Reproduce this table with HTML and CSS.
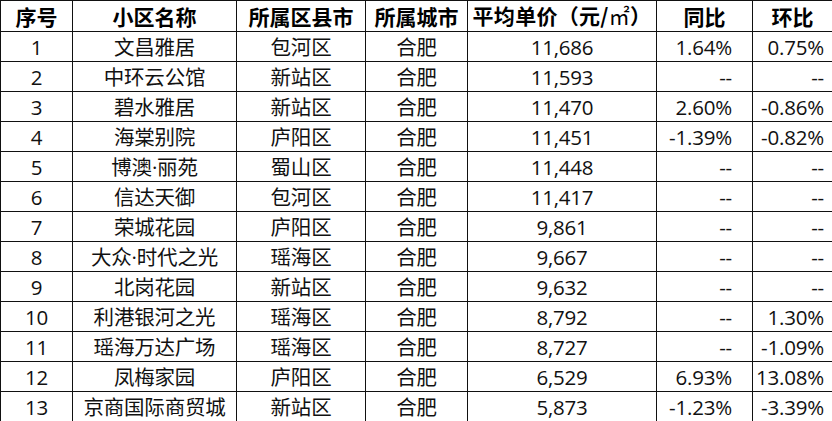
FILE: index.html
```html
<!DOCTYPE html>
<html lang="zh">
<head>
<meta charset="utf-8">
<link rel="stylesheet" href="styles.css">
</head>
<body>
<table class="price-table">
  <colgroup>
    <col class="c-no"><col class="c-name"><col class="c-dist"><col class="c-city"><col class="c-price"><col class="c-yoy"><col class="c-mom">
  </colgroup>
  <thead>
    <tr><th>序号</th><th>小区名称</th><th>所属区县市</th><th>所属城市</th><th class="h-price">平均单价（元/<span class="unit">㎡</span>）</th><th>同比</th><th>环比</th></tr>
  </thead>
  <tbody>
    <tr><td>1</td><td>文昌雅居</td><td>包河区</td><td>合肥</td><td>11,686</td><td class="yoy">1.64%</td><td class="mom">0.75%</td></tr>
    <tr><td>2</td><td>中环云公馆</td><td>新站区</td><td>合肥</td><td>11,593</td><td class="yoy">--</td><td class="mom">--</td></tr>
    <tr><td>3</td><td>碧水雅居</td><td>新站区</td><td>合肥</td><td>11,470</td><td class="yoy">2.60%</td><td class="mom">-0.86%</td></tr>
    <tr><td>4</td><td>海棠别院</td><td>庐阳区</td><td>合肥</td><td>11,451</td><td class="yoy">-1.39%</td><td class="mom">-0.82%</td></tr>
    <tr><td>5</td><td>博澳·丽苑</td><td>蜀山区</td><td>合肥</td><td>11,448</td><td class="yoy">--</td><td class="mom">--</td></tr>
    <tr><td>6</td><td>信达天御</td><td>包河区</td><td>合肥</td><td>11,417</td><td class="yoy">--</td><td class="mom">--</td></tr>
    <tr><td>7</td><td>荣城花园</td><td>庐阳区</td><td>合肥</td><td>9,861</td><td class="yoy">--</td><td class="mom">--</td></tr>
    <tr><td>8</td><td>大众·时代之光</td><td>瑶海区</td><td>合肥</td><td>9,667</td><td class="yoy">--</td><td class="mom">--</td></tr>
    <tr><td>9</td><td>北岗花园</td><td>新站区</td><td>合肥</td><td>9,632</td><td class="yoy">--</td><td class="mom">--</td></tr>
    <tr><td>10</td><td>利港银河之光</td><td>瑶海区</td><td>合肥</td><td>8,792</td><td class="yoy">--</td><td class="mom">1.30%</td></tr>
    <tr><td>11</td><td>瑶海万达广场</td><td>瑶海区</td><td>合肥</td><td>8,727</td><td class="yoy">--</td><td class="mom">-1.09%</td></tr>
    <tr><td>12</td><td>凤梅家园</td><td>庐阳区</td><td>合肥</td><td>6,529</td><td class="yoy">6.93%</td><td class="mom">13.08%</td></tr>
    <tr><td>13</td><td>京商国际商贸城</td><td>新站区</td><td>合肥</td><td>5,873</td><td class="yoy">-1.23%</td><td class="mom">-3.39%</td></tr>
  </tbody>
</table>
</body>
</html>
```
FILE: styles.css
```css
html, body {
  margin: 0;
  padding: 0;
  background: #fff;
}
.price-table {
  width: 832px;
  border-collapse: collapse;
  table-layout: fixed;
  font-family: "Open Sans", "Noto Sans CJK SC", sans-serif;
  font-size: 20.5px;
  color: #111;
}
.c-no { width: 72px; }
.c-name { width: 164px; }
.c-dist { width: 129px; }
.c-city { width: 102px; }
.c-price { width: 189px; }
.c-yoy { width: 96px; }
.c-mom { width: 80px; }
.price-table th,
.price-table td {
  border: 1.5px solid #111;
  height: 29px;
  padding: 0 2px;
  text-align: center;
  white-space: nowrap;
  line-height: 28px;
  overflow: hidden;
}
.price-table td {
  letter-spacing: -0.2px;
}
.price-table th {
  font-family: "Noto Sans CJK SC", sans-serif;
  font-weight: 700;
  font-size: 21px;
  color: #000;
}
.price-table th.h-price {
  letter-spacing: 0.3px;
}
.unit {
  font-family: "Liberation Serif", "Noto Sans CJK SC", serif;
  font-weight: 400;
}
.price-table td.yoy {
  text-align: right;
  padding-right: 20px;
}
.price-table td.mom {
  text-align: right;
  padding-right: 8px;
}
```
